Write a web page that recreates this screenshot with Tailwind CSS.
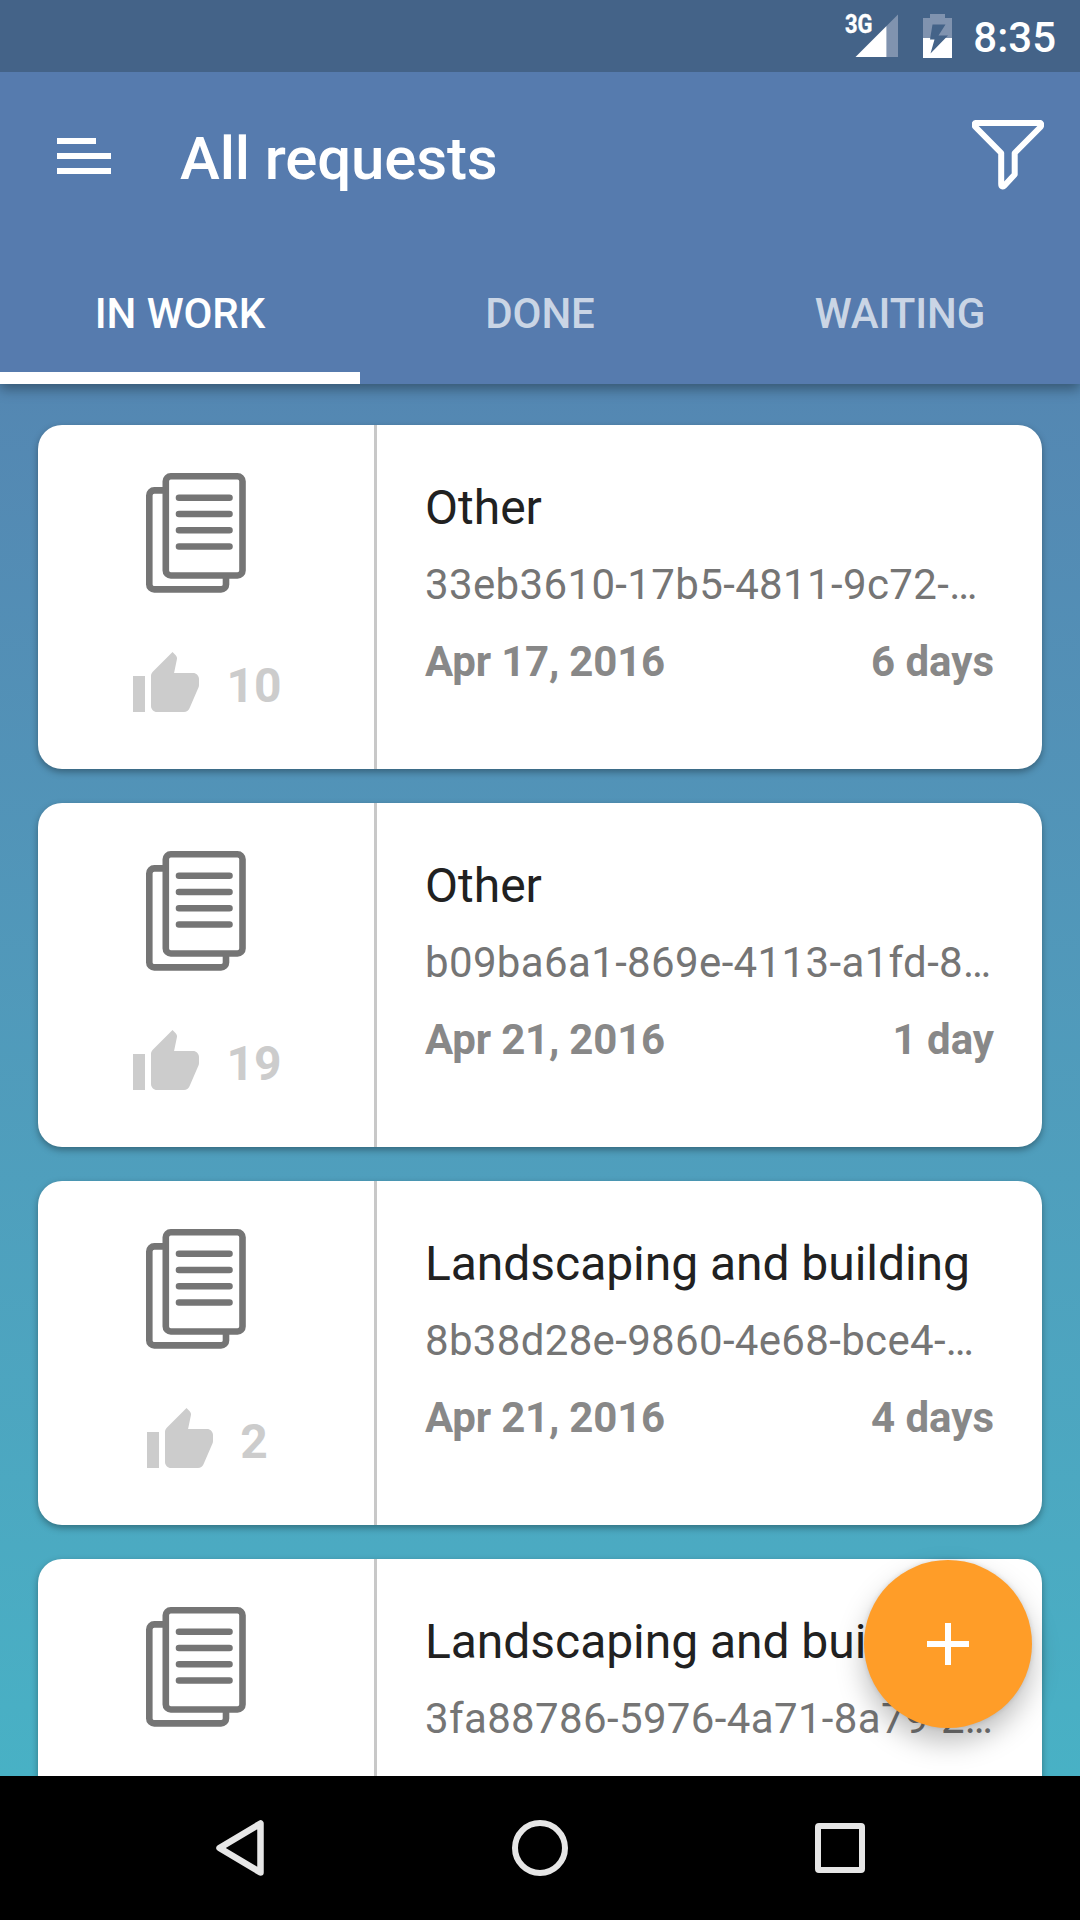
<!DOCTYPE html>
<html lang="en">
<head>
<meta charset="utf-8">
<title>All requests</title>
<script src="https://cdn.jsdelivr.net/npm/@tailwindcss/browser@4"></script>
</head>
<body class="w-[1080px] h-[1920px] overflow-hidden flex flex-col bg-black font-['Roboto',sans-serif]">
<svg class="hidden">
  <symbol id="docs" viewBox="0 0 100 120">
    <g fill="none" stroke="#757575" stroke-width="6.6">
      <rect x="19.8" y="3.3" width="76.7" height="99.2" rx="5"/>
      <path d="M19.8 17.4H8.300a5 5 0 0 0-5 5V111.400a5 5 0 0 0 5 5H75a5 5 0 0 0 5-5V103"/>
      <path stroke-linecap="round" d="M33 24.700H83.500M33 41H83.500M33 57.200H83.500M33 73.500H83.500"/>
    </g>
  </symbol>
  <symbol id="thumb" viewBox="0 0 24 24">
    <path fill="#ccc" d="M1 21h4V9H1v12zm22-11c0-1.100-.9-2-2-2h-6.310l.95-4.570.03-.32c0-.41-.17-.79-.44-1.060L14.170 1 7.590 7.590C7.220 7.950 7 8.450 7 9v10c0 1.100.9 2 2 2h9c.83 0 1.540-.5 1.840-1.220l3.020-7.050c.09-.23.14-.47.14-.73v-1.910l-.01-.01L23 10z"/>
  </symbol>
</svg>

<header class="relative z-10 h-[384px] shrink-0 flex flex-col bg-[#567bae] text-white shadow-[0_5px_12px_rgba(0,0,0,0.36)]">
  <div class="h-[72px] shrink-0 bg-[#446388] flex justify-end items-center pr-6">
    <svg class="h-[72px] w-[129px]" viewBox="844 0 129 72">
      <text x="845" y="33.300" font-size="25.500" font-weight="700" fill="#fff" stroke="#fff" stroke-width="0.4" textLength="27.500" lengthAdjust="spacingAndGlyphs">3G</text>
      <path d="M898 14.500V57H886.500V26z" fill="#8093af"/>
      <path d="M886.500 26V57H855.500z" fill="#fff"/>
      <path d="M930 14h15v4h7v20h-29V18h7z" fill="#8093af"/>
      <path d="M923 38h29v20h-29z" fill="#fff"/>
      <path d="M932.500 24.500H945.500L938.500 35.500H948L930.500 53.500L934.500 39.500H930z" fill="#446388"/>
    </svg>
    <div class="text-[42px] leading-[72px] font-medium pt-[4px]">8:35</div>
  </div>
  <div class="h-[168px] shrink-0 flex items-center pl-[57px] pr-9">
    <div class="w-[52px] mr-[2px] flex flex-col gap-[9px]">
      <div class="h-[6px] w-[39px] bg-white"></div>
      <div class="h-[6px] w-[54px] bg-white"></div>
      <div class="h-[6px] w-[54px] bg-white"></div>
    </div>
    <h1 class="ml-[69px] pt-[5px] text-[60px] leading-[72px] font-medium grow tracking-[-0.15px]">All requests</h1>
    <svg class="w-[72px] h-[72px] mt-[-4px]" viewBox="972 118 72 72" fill="none" stroke="#fff" stroke-width="6" stroke-linejoin="round">
      <path d="M975.500 123H1040.500Q1042 124.500 1040.500 127L1014.700 153V174.500L1004.500 185.500Q1001.200 188 1001.200 184V153L975.500 127Q973.500 124.500 975.500 123z"/>
    </svg>
  </div>
  <nav class="grow grid grid-cols-3 text-[42px] leading-[48px] font-medium text-center tracking-[-0.1px]">
    <div class="pt-[50px] border-b-[12px] border-white">IN WORK</div>
    <div class="pt-[50px] text-white/70">DONE</div>
    <div class="pt-[50px] text-white/70">WAITING</div>
  </nav>
</header>

<main class="relative h-[1392px] shrink-0 overflow-hidden bg-linear-to-b from-[#5487b2] to-[#48b1c5] px-[38px] pt-[41px] flex flex-col gap-[34px]">
  <article class="h-[344px] shrink-0 flex bg-white rounded-[24px] shadow-[0_3px_7px_rgba(0,0,0,0.34)]">
    <div class="w-[339px] border-r-[3px] border-[#c8c8c8] flex flex-col items-center pt-[48px]">
      <svg class="w-[100px] h-[120px] mr-5"><use href="#docs"/></svg>
      <div class="mt-[56px] flex items-center gap-6">
        <svg class="size-[72px]"><use href="#thumb"/></svg>
        <span class="text-[48px] leading-[72px] font-bold text-[#ccc] pt-[1px] -mb-[1px]">10</span>
      </div>
    </div>
    <div class="w-[665px] px-12 pt-[55px] flex flex-col gap-[21px] whitespace-nowrap">
      <h2 class="text-[48px] leading-[56px] text-[#212121]">Other</h2>
      <p class="text-[42px] leading-[56px] text-[#757575] tracking-[0.36px]">33eb3610-17b5-4811-9c72-…</p>
      <div class="flex justify-between text-[42px] leading-[56px] font-bold text-[#888]"><span class="tracking-[-0.2px]">Apr 17, 2016</span><span>6 days</span></div>
    </div>
  </article>
  <article class="h-[344px] shrink-0 flex bg-white rounded-[24px] shadow-[0_3px_7px_rgba(0,0,0,0.34)]">
    <div class="w-[339px] border-r-[3px] border-[#c8c8c8] flex flex-col items-center pt-[48px]">
      <svg class="w-[100px] h-[120px] mr-5"><use href="#docs"/></svg>
      <div class="mt-[56px] flex items-center gap-6">
        <svg class="size-[72px]"><use href="#thumb"/></svg>
        <span class="text-[48px] leading-[72px] font-bold text-[#ccc] pt-[1px] -mb-[1px]">19</span>
      </div>
    </div>
    <div class="w-[665px] px-12 pt-[55px] flex flex-col gap-[21px] whitespace-nowrap">
      <h2 class="text-[48px] leading-[56px] text-[#212121]">Other</h2>
      <p class="text-[42px] leading-[56px] text-[#757575] tracking-[0.36px]">b09ba6a1-869e-4113-a1fd-8…</p>
      <div class="flex justify-between text-[42px] leading-[56px] font-bold text-[#888]"><span class="tracking-[-0.2px]">Apr 21, 2016</span><span>1 day</span></div>
    </div>
  </article>
  <article class="h-[344px] shrink-0 flex bg-white rounded-[24px] shadow-[0_3px_7px_rgba(0,0,0,0.34)]">
    <div class="w-[339px] border-r-[3px] border-[#c8c8c8] flex flex-col items-center pt-[48px]">
      <svg class="w-[100px] h-[120px] mr-5"><use href="#docs"/></svg>
      <div class="mt-[56px] flex items-center gap-6">
        <svg class="size-[72px]"><use href="#thumb"/></svg>
        <span class="text-[48px] leading-[72px] font-bold text-[#ccc] pt-[1px] -mb-[1px]">2</span>
      </div>
    </div>
    <div class="w-[665px] px-12 pt-[55px] flex flex-col gap-[21px] whitespace-nowrap">
      <h2 class="text-[48px] leading-[56px] text-[#212121] tracking-[-0.05px]">Landscaping and building</h2>
      <p class="text-[42px] leading-[56px] text-[#757575] tracking-[0.33px]">8b38d28e-9860-4e68-bce4-…</p>
      <div class="flex justify-between text-[42px] leading-[56px] font-bold text-[#888]"><span class="tracking-[-0.2px]">Apr 21, 2016</span><span>4 days</span></div>
    </div>
  </article>
  <article class="h-[344px] shrink-0 flex bg-white rounded-[24px] shadow-[0_3px_7px_rgba(0,0,0,0.34)]">
    <div class="w-[339px] border-r-[3px] border-[#c8c8c8] flex flex-col items-center pt-[48px]">
      <svg class="w-[100px] h-[120px] mr-5"><use href="#docs"/></svg>
    </div>
    <div class="w-[665px] px-12 pt-[55px] flex flex-col gap-[21px] whitespace-nowrap">
      <h2 class="text-[48px] leading-[56px] text-[#212121] tracking-[-0.05px]">Landscaping and building</h2>
      <p class="text-[42px] leading-[56px] text-[#757575] tracking-[0.36px]">3fa88786-5976-4a71-8a79-2…</p>
    </div>
  </article>
  <button aria-label="Add" class="absolute right-12 bottom-12 size-[168px] rounded-full bg-[#ff9d28] flex items-center justify-center shadow-[0_14px_28px_rgba(0,0,0,0.26),0_0_5px_rgba(0,0,0,0.12)]">
    <svg class="size-[42px]" viewBox="0 0 42 42" fill="#fff"><path d="M18 0h6v18h18v6H24v18h-6V24H0v-6h18z"/></svg>
  </button>
</main>

<footer class="h-[144px] shrink-0 bg-black flex items-center justify-center gap-[200px]">
  <svg class="w-[100px] h-[72px]" viewBox="190 1812 100 72" fill="none" stroke="#e6e6e6" stroke-width="6.500" stroke-linejoin="round"><path d="M260.500 1823.500V1872.500L219.500 1848z"/></svg>
  <svg class="w-[100px] h-[72px]" viewBox="490 1812 100 72" fill="none" stroke="#e6e6e6" stroke-width="6"><circle cx="540" cy="1848" r="25"/></svg>
  <svg class="w-[100px] h-[72px]" viewBox="790 1812 100 72" fill="none" stroke="#e6e6e6" stroke-width="6"><rect x="818" y="1826" width="44" height="44" rx="1"/></svg>
</footer>
</body>
</html>
